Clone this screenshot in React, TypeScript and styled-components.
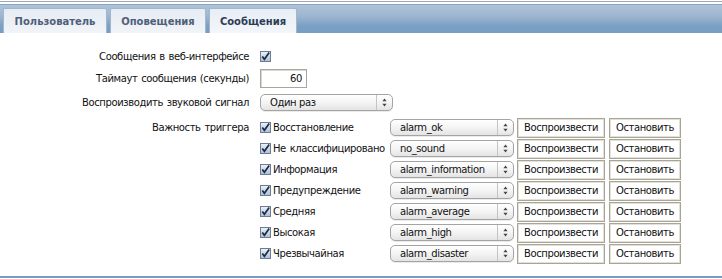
import styled, { createGlobalStyle } from "styled-components";

// ============ Global ============

const GlobalStyle = createGlobalStyle`
  html, body {
    margin: 0;
    padding: 0;
    background: #ffffff;
  }
  body {
    font-family: "DejaVu Sans", "Liberation Sans", sans-serif;
    font-size: 10px;
    letter-spacing: -0.4px;
    color: #111;
  }
`;

// ============ Styled Components ============

const Page = styled.div`
  width: 722px;
  height: 279px;
  display: flex;
  flex-direction: column;
  overflow: hidden;
`;

const TopRule = styled.div`
  height: 1px;
  margin-top: 1px;
  background: #9aa7b6;
`;

const TabBar = styled.div`
  margin-top: 2px;
  height: 29px;
  border-top: 1px solid #8aa4c2;
  box-sizing: border-box;
  background: linear-gradient(to bottom, #aec3d9 0%, #9db6d0 40%, #7aa0c4 75%, #779dc2 100%);
  display: flex;
  align-items: flex-end;
  gap: 3px;
  padding-left: 3px;
`;

const Tab = styled.div<{ $active?: boolean; $w: number }>`
  width: ${(p) => p.$w}px;
  height: 25px;
  box-sizing: border-box;
  display: flex;
  align-items: center;
  justify-content: center;
  font-weight: bold;
  font-size: 10px;
  letter-spacing: 0;
  border: 1px solid #a2b7ce;
  border-bottom: none;
  border-radius: 2px 2px 0 0;
  color: ${(p) => (p.$active ? "#2c3d55" : "#4e6079")};
  background: ${(p) =>
    p.$active
      ? "linear-gradient(to bottom, #e8eef5, #f3f6fa)"
      : "linear-gradient(to bottom, #e6ecf3, #f1f4f8)"};
`;

const Form = styled.div`
  flex: 1;
  padding-top: 12px;
  display: flex;
  flex-direction: column;
`;

const FormRow = styled.div<{ $h: number }>`
  display: flex;
  align-items: center;
  height: ${(p) => p.$h}px;
`;

const TopRow = styled.div`
  display: flex;
  align-items: flex-start;
  margin-top: 3px;
`;

const Label = styled.div<{ $line?: number }>`
  width: 249px;
  padding-right: 11px;
  text-align: right;
  word-spacing: 1px;
  white-space: nowrap;
  line-height: ${(p) => (p.$line ? `${p.$line}px` : "normal")};
`;

const NumberInput = styled.div`
  width: 47px;
  height: 19px;
  box-sizing: border-box;
  border: 1px solid #a9a69b;
  box-shadow: inset 1px 1px 0 #d9d7d0;
  text-align: right;
  padding-right: 4px;
  line-height: 17px;
`;

const Select = styled.div<{ $w: number }>`
  position: relative;
  width: ${(p) => p.$w}px;
  height: 17px;
  box-sizing: border-box;
  border: 1px solid #a4a4a4;
  border-radius: 5px;
  background: linear-gradient(to bottom, #ffffff 0%, #f4f4f4 50%, #e4e4e4 100%);
  box-shadow: 0 1px 0 rgba(0, 0, 0, 0.08);
  display: flex;
  align-items: center;
  padding-left: 9px;
  line-height: 15px;
  white-space: nowrap;
`;

const SelectArrows = styled.span`
  position: absolute;
  right: 0;
  top: 0;
  bottom: 0;
  width: 15px;
  border-left: 1px solid #c4c4c4;
  display: flex;
  align-items: center;
  justify-content: center;
`;

const TriggerList = styled.div`
  display: flex;
  flex-direction: column;
`;

const TriggerRow = styled.div`
  height: 21px;
  display: flex;
  align-items: center;
`;

const TriggerName = styled.span`
  width: 117px;
  margin-left: 2px;
  white-space: nowrap;
  word-spacing: 1px;
`;

const Button = styled.div<{ $w: number; $gap: number }>`
  width: ${(p) => p.$w}px;
  height: 20px;
  box-sizing: border-box;
  border: 1px solid #a8a597;
  box-shadow: inset 0 0 0 1px #e2e0d8;
  background: #ffffff;
  display: flex;
  align-items: center;
  justify-content: center;
  white-space: nowrap;
  margin-left: ${(p) => p.$gap}px;
`;

const BottomRule = styled.div`
  height: 2px;
  background: #7b9cbd;
  margin-bottom: 1px;
`;

// ============ Icons ============

function Check() {
  return (
    <svg width="11" height="11" viewBox="0 0 11 11" style={{ flex: "none" }}>
      <defs>
        <linearGradient id="cbg" x1="0" y1="0" x2="0" y2="1">
          <stop offset="0" stopColor="#eef3f9" />
          <stop offset="1" stopColor="#a9bdd8" />
        </linearGradient>
      </defs>
      <rect x="0.5" y="0.5" width="10" height="10" fill="url(#cbg)" stroke="#6d7c90" />
      <path d="M2.3 5.4 L4.4 8.2 L9.2 1.6" fill="none" stroke="#1b2a45" strokeWidth="1.7" />
    </svg>
  );
}

function UpDown() {
  return (
    <svg width="5" height="9" viewBox="0 0 5 9">
      <path d="M2.5 0.5 L4.6 3.3 L0.4 3.3 Z" fill="#444" />
      <path d="M2.5 8.5 L4.6 5.7 L0.4 5.7 Z" fill="#444" />
    </svg>
  );
}

// ============ Component ============

const triggers = [
  { name: "Восстановление", sound: "alarm_ok" },
  { name: "Не классифицировано", sound: "no_sound" },
  { name: "Информация", sound: "alarm_information" },
  { name: "Предупреждение", sound: "alarm_warning" },
  { name: "Средняя", sound: "alarm_average" },
  { name: "Высокая", sound: "alarm_high" },
  { name: "Чрезвычайная", sound: "alarm_disaster" },
];

export default function App() {
  return (
    <Page>
      <GlobalStyle />
      <TopRule />
      <TabBar>
        <Tab $w={104}>Пользователь</Tab>
        <Tab $w={96}>Оповещения</Tab>
        <Tab $w={88} $active>
          Сообщения
        </Tab>
      </TabBar>

      <Form>
        <FormRow $h={22}>
          <Label>Сообщения в веб-интерфейсе</Label>
          <Check />
        </FormRow>
        <FormRow $h={23}>
          <Label>Таймаут сообщения (секунды)</Label>
          <NumberInput>60</NumberInput>
        </FormRow>
        <FormRow $h={24}>
          <Label>Воспроизводить звуковой сигнал</Label>
          <Select $w={133}>
            Один раз
            <SelectArrows>
              <UpDown />
            </SelectArrows>
          </Select>
        </FormRow>
        <TopRow>
          <Label $line={21}>Важность триггера</Label>
          <TriggerList>
            {triggers.map((t) => (
              <TriggerRow key={t.sound}>
                <Check />
                <TriggerName>{t.name}</TriggerName>
                <Select $w={124}>
                  {t.sound}
                  <SelectArrows>
                    <UpDown />
                  </SelectArrows>
                </Select>
                <Button $w={88} $gap={3}>
                  Воспроизвести
                </Button>
                <Button $w={72} $gap={4}>
                  Остановить
                </Button>
              </TriggerRow>
            ))}
          </TriggerList>
        </TopRow>
      </Form>

      <BottomRule />
    </Page>
  );
}
